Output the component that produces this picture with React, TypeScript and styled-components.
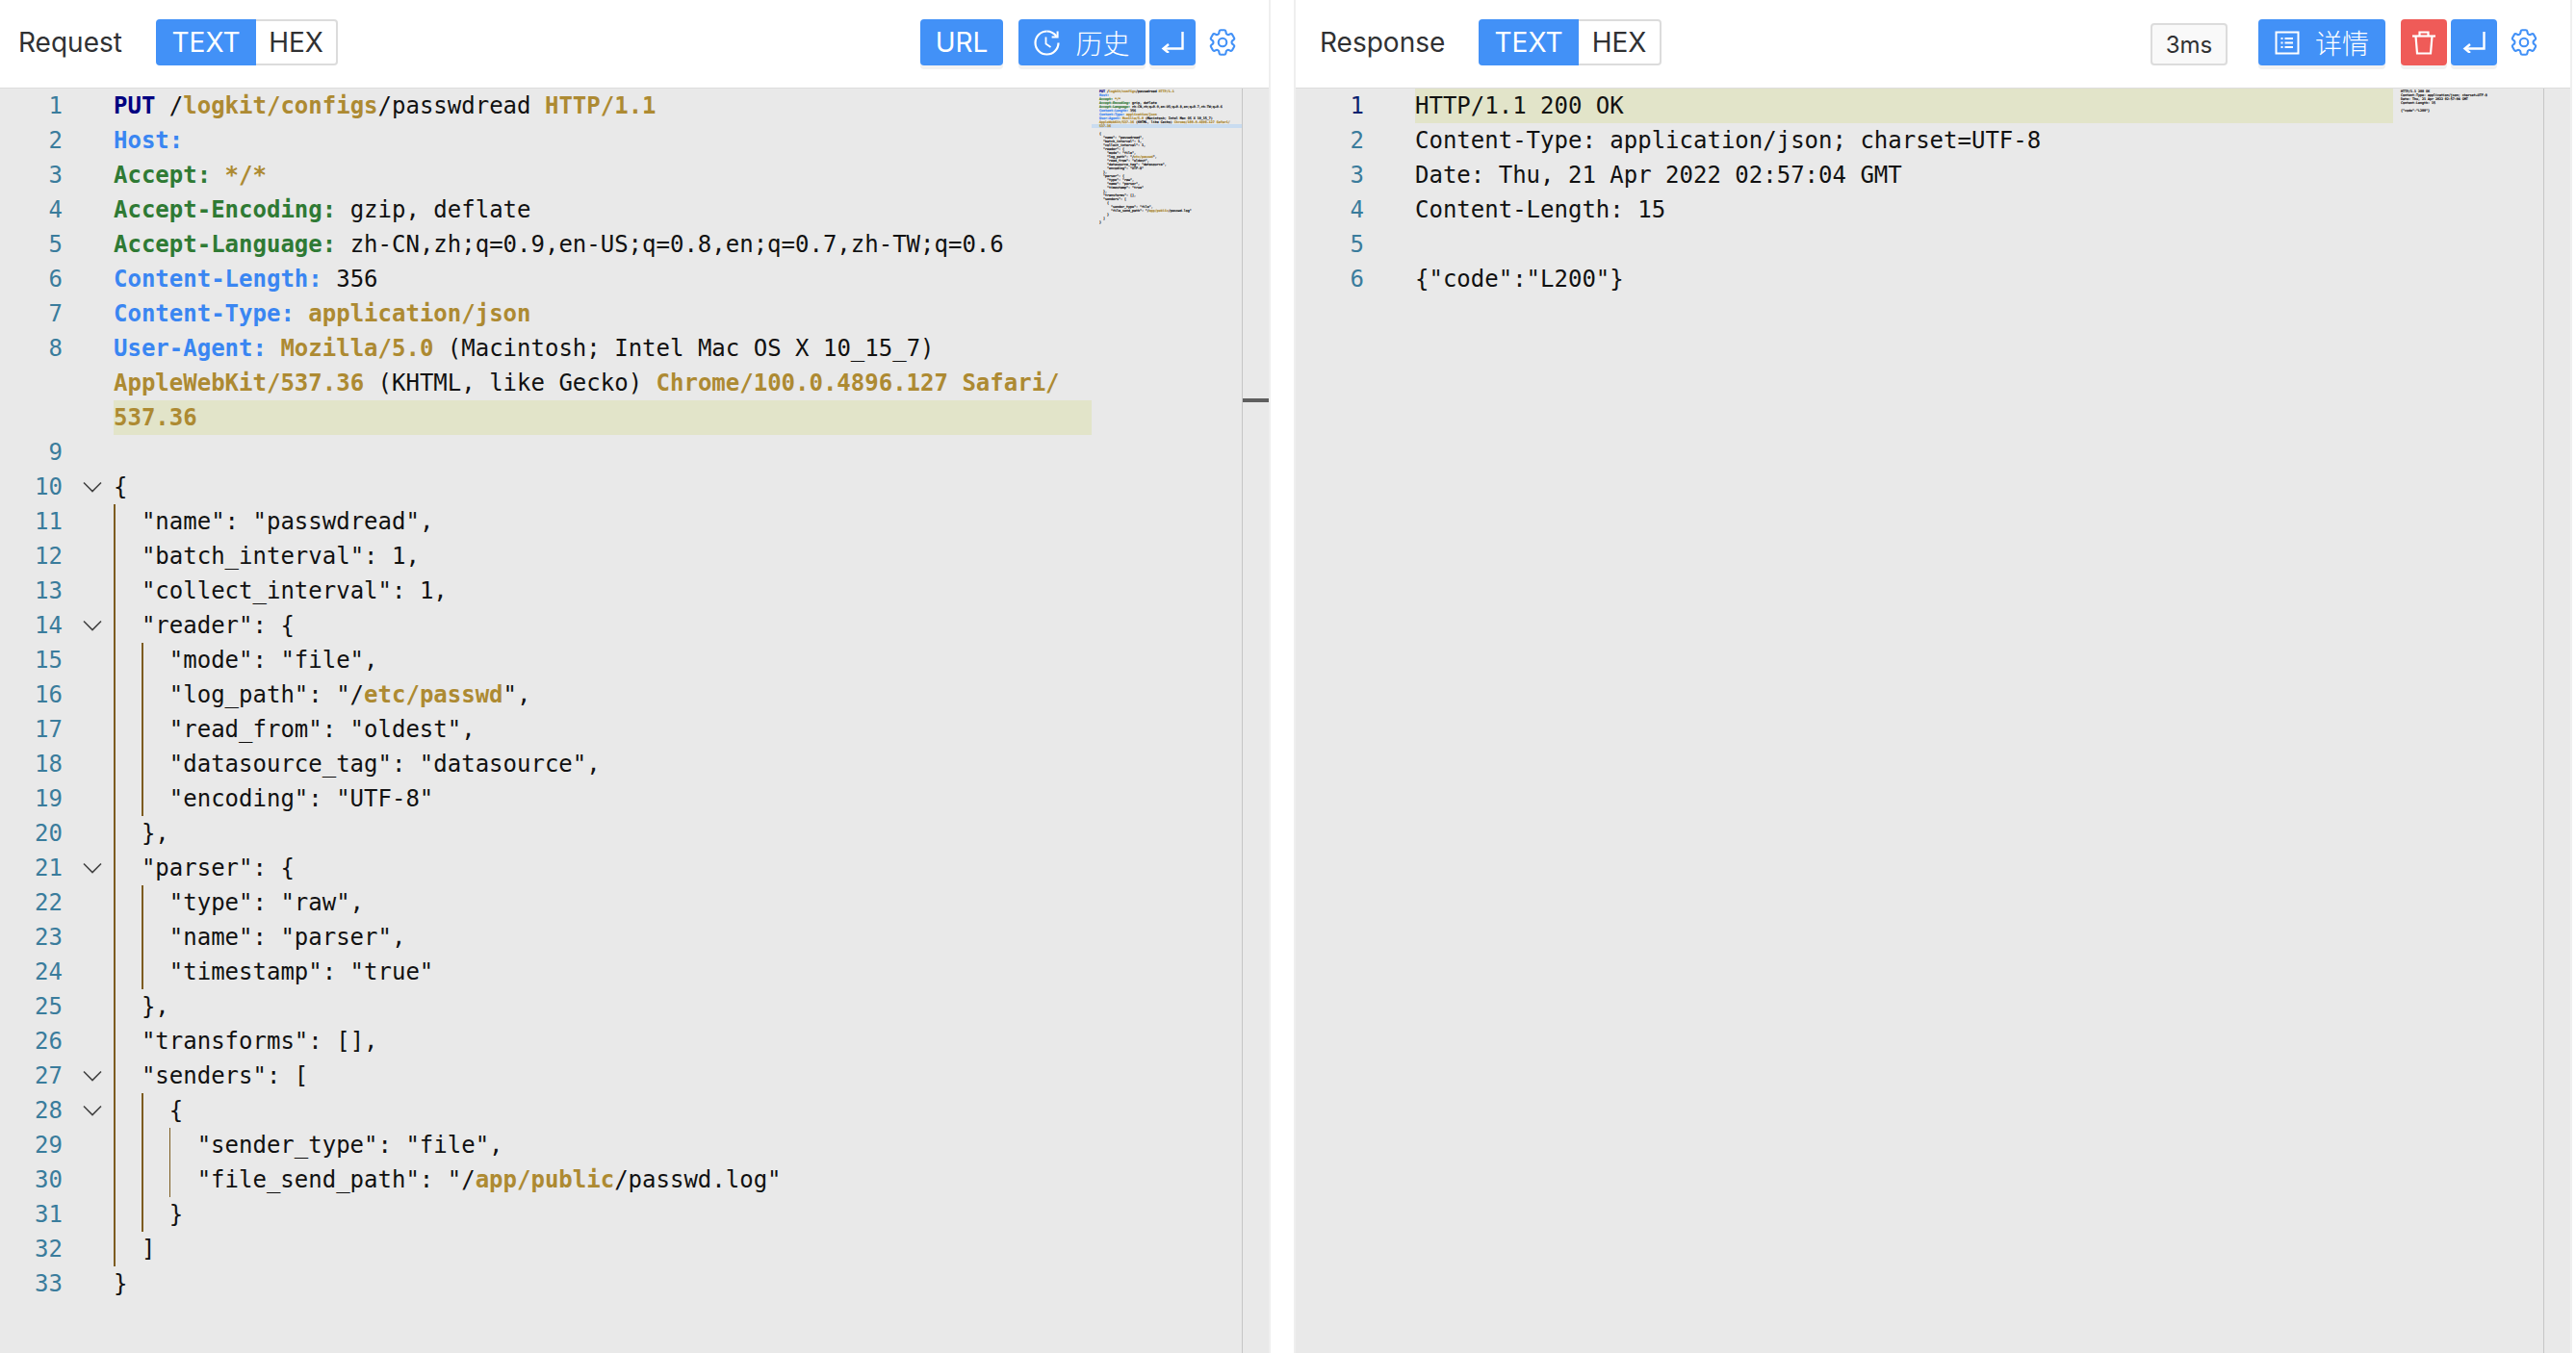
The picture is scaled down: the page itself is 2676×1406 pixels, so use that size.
import React from 'react';
import styled, { createGlobalStyle } from 'styled-components';
import { HiOutlineCog6Tooth } from 'react-icons/hi2';

const GlobalStyle = createGlobalStyle`
  html,
  body {
    margin: 0;
    background: #fff;
    overflow: hidden;
  }
`;

const BLUE = '#4291f7';
const CODE_FONT = '"DejaVu Sans Mono", "Liberation Mono", monospace';

type Kind = 'plain' | 'method' | 'blue' | 'green' | 'gold';
type Seg = [Kind, string];

interface Line {
  depth?: number;
  fold?: boolean;
  rows: Seg[][];
  activeRow?: number;
}

const p = (t: string): Seg => ['plain', t];
const g = (t: string): Seg => ['gold', t];

const json = (depth: number, segs: Seg[] | string, fold = false): Line => ({
  depth,
  fold,
  rows: [typeof segs === 'string' ? [p(segs)] : segs],
});

const requestLines: Line[] = [
  {
    rows: [
      [['method', 'PUT'], p(' /'), g('logkit/configs'), p('/passwdread '), g('HTTP/1.1')],
    ],
  },
  { rows: [[['blue', 'Host:']]] },
  { rows: [[['green', 'Accept:'], p(' '), g('*/*')]] },
  { rows: [[['green', 'Accept-Encoding:'], p(' gzip, deflate')]] },
  {
    rows: [
      [['green', 'Accept-Language:'], p(' zh-CN,zh;q=0.9,en-US;q=0.8,en;q=0.7,zh-TW;q=0.6')],
    ],
  },
  { rows: [[['blue', 'Content-Length:'], p(' 356')]] },
  { rows: [[['blue', 'Content-Type:'], p(' '), g('application/json')]] },
  {
    rows: [
      [['blue', 'User-Agent:'], p(' '), g('Mozilla/5.0'), p(' (Macintosh; Intel Mac OS X 10_15_7)')],
      [g('AppleWebKit/537.36'), p(' (KHTML, like Gecko) '), g('Chrome/100.0.4896.127 Safari/')],
      [g('537.36')],
    ],
    activeRow: 2,
  },
  { rows: [[]] },
  json(0, '{', true),
  json(1, '"name": "passwdread",'),
  json(1, '"batch_interval": 1,'),
  json(1, '"collect_interval": 1,'),
  json(1, '"reader": {', true),
  json(2, '"mode": "file",'),
  json(2, [p('"log_path": "/'), g('etc/passwd'), p('",')]),
  json(2, '"read_from": "oldest",'),
  json(2, '"datasource_tag": "datasource",'),
  json(2, '"encoding": "UTF-8"'),
  json(1, '},'),
  json(1, '"parser": {', true),
  json(2, '"type": "raw",'),
  json(2, '"name": "parser",'),
  json(2, '"timestamp": "true"'),
  json(1, '},'),
  json(1, '"transforms": [],'),
  json(1, '"senders": [', true),
  json(2, '{', true),
  json(3, '"sender_type": "file",'),
  json(3, [p('"file_send_path": "/'), g('app/public'), p('/passwd.log"')]),
  json(2, '}'),
  json(1, ']'),
  json(0, '}'),
];

const responseLines: Line[] = [
  { rows: [[p('HTTP/1.1 200 OK')]], activeRow: 0 },
  { rows: [[p('Content-Type: application/json; charset=UTF-8')]] },
  { rows: [[p('Date: Thu, 21 Apr 2022 02:57:04 GMT')]] },
  { rows: [[p('Content-Length: 15')]] },
  { rows: [[]] },
  { rows: [[p('{"code":"L200"}')]] },
];

const tokenColors: Record<Kind, string> = {
  plain: '#111',
  method: '#000080',
  blue: '#3a86f2',
  green: '#2f7a34',
  gold: '#ad8a32',
};

const Page = styled.div`
  display: flex;
  width: 2676px;
  height: 1406px;
  overflow: hidden;
  background: #fff;
  font-family: Inter, "Noto Sans CJK SC", sans-serif;
`;

const Panel = styled.section<{ $width: number }>`
  display: flex;
  flex-direction: column;
  flex: none;
  width: ${(props) => props.$width}px;
  height: 100%;
`;

const PanelGap = styled.div`
  flex: none;
  width: 24px;
  border-left: 2px solid #efefef;
  border-right: 2px solid #efefef;
`;

const EdgeBand = styled.div`
  flex: none;
  width: 2px;
  background: #efefef;
`;

const Toolbar = styled.header<{ $inset: number }>`
  display: flex;
  align-items: center;
  flex: none;
  height: 92px;
  padding: 0 0 4px ${(props) => props.$inset}px;
  box-sizing: border-box;
`;

const Title = styled.h2<{ $width: number }>`
  flex: none;
  width: ${(props) => props.$width}px;
  margin: 0;
  color: #303133;
  font-size: 28px;
  font-weight: 400;
  line-height: 48px;
`;

const Segmented = styled.div`
  display: flex;
  height: 48px;
`;

const Segment = styled.div<{ $active?: boolean; $width: number }>`
  display: flex;
  align-items: center;
  justify-content: center;
  width: ${(props) => props.$width}px;
  box-sizing: border-box;
  font-size: 28px;
  color: ${(props) => (props.$active ? '#fff' : '#303133')};
  background: ${(props) => (props.$active ? BLUE : '#fff')};
  border: ${(props) => (props.$active ? 'none' : '2px solid #dcdcdc')};
  border-left: none;
  border-radius: ${(props) => (props.$active ? '4px 0 0 4px' : '0 4px 4px 0')};
`;

const Spacer = styled.div<{ $width?: number }>`
  flex: ${(props) => (props.$width ? 'none' : '1')};
  width: ${(props) => props.$width ?? 0}px;
`;

const Button = styled.div<{ $width: number; $danger?: boolean }>`
  display: flex;
  align-items: center;
  justify-content: center;
  flex: none;
  width: ${(props) => props.$width}px;
  height: 48px;
  color: #fff;
  font-size: 28px;
  border-radius: 4px;
  background: ${(props) => (props.$danger ? '#ef5b58' : BLUE)};
  box-shadow: 0 4px 0 #f2f2f2;
`;

const IconLabel = styled.span`
  margin-left: 16px;
  font-family: "Noto Sans CJK SC", sans-serif;
  font-weight: 300;
`;

const Gear = styled(HiOutlineCog6Tooth)`
  flex: none;
  width: 34px;
  height: 34px;
  color: ${BLUE};
`;

const Timing = styled.div`
  display: flex;
  align-items: center;
  justify-content: center;
  flex: none;
  width: 80px;
  height: 44px;
  margin-top: 4px;
  box-sizing: border-box;
  color: #303133;
  font-size: 24px;
  background: #f9f9f9;
  border: 2px solid #dcdcdc;
  border-radius: 4px;
`;

const Editor = styled.div`
  display: flex;
  flex: 1;
  min-height: 0;
  background: #e9e9e9;
  border-top: 1px solid #ddd;
  margin-top: -1px;
`;

const Code = styled.div`
  flex: none;
  font-family: ${CODE_FONT};
  font-size: 24px;
  line-height: 36px;
`;

const CodeLine = styled.div`
  display: flex;
  align-items: flex-start;
`;

const LineNumber = styled.div<{ $width: number; $active?: boolean }>`
  flex: none;
  width: ${(props) => props.$width}px;
  height: 36px;
  text-align: right;
  color: ${(props) => (props.$active ? '#0b216f' : '#3a7c9c')};
`;

const FoldCell = styled.div`
  display: flex;
  align-items: center;
  justify-content: center;
  flex: none;
  width: 53px;
  height: 36px;
  padding-left: 9px;
  box-sizing: border-box;
`;

const Rows = styled.div`
  flex: none;
  width: 1016px;
`;

const Row = styled.div<{ $active?: boolean }>`
  display: flex;
  height: 36px;
  white-space: pre;
  background: ${(props) => (props.$active ? '#e2e4c9' : 'transparent')};
`;

const Indent = styled.span<{ $level: number }>`
  flex: none;
  width: 2ch;
  box-sizing: border-box;
  border-left: ${(props) => (props.$level === 2 ? 1 : 2)}px solid #7d5c20;
`;

const Token = styled.span<{ $kind: Kind }>`
  color: ${(props) => tokenColors[props.$kind]};
  font-weight: ${(props) => (props.$kind === 'plain' ? 400 : 700)};
`;

const Minimap = styled.div`
  flex: none;
  width: 156px;
  padding-top: 1px;
  box-sizing: border-box;
  font-family: ${CODE_FONT};
  font-size: 3.32px;
  line-height: 4px;
  -webkit-text-stroke: 0.2px currentColor;
`;

const MiniRow = styled.div<{ $marked?: boolean }>`
  height: 4px;
  padding-left: 8px;
  white-space: pre;
  background: ${(props) => (props.$marked ? '#c9dcf0' : 'transparent')};
`;

const Ruler = styled.div`
  position: relative;
  flex: none;
  width: 28px;
  border-left: 1px solid #c6c6c6;
  box-sizing: border-box;
`;

const RulerMark = styled.div<{ $top: number }>`
  position: absolute;
  left: 0;
  right: 0;
  top: ${(props) => props.$top}px;
  height: 4px;
  background: #5f5f5f;
`;

const Chevron = () => (
  <svg width="20" height="12" viewBox="0 0 20 12" fill="none">
    <path d="M1 1.5 10 10.5 19 1.5" stroke="#424242" strokeWidth="1.6" />
  </svg>
);

const HistoryIcon = () => (
  <svg width="27" height="27" viewBox="0 0 27 27" fill="none" stroke="#fff" strokeWidth="2.2">
    <path d="M13.5 1.5A12 12 0 1 0 25.5 13.5" />
    <path d="M13.5 1.5C17.5 1.5 21 3.5 23.4 6.6" />
    <path d="M24.6 1.6V7.6H18.6" strokeWidth="2" />
    <path d="M12.5 7.5V14.5L17.5 18" strokeWidth="1.8" />
  </svg>
);

const WrapIcon = () => (
  <svg width="24" height="22" viewBox="0 0 24 22" fill="none" stroke="#fff" strokeWidth="2.4">
    <path d="M22.5 0V17.5H3" />
    <path d="M8 13 2.5 17.5 8 22" />
  </svg>
);

const DetailIcon = () => (
  <svg width="26" height="25" viewBox="0 0 26 25" fill="none" stroke="#fff" strokeWidth="2">
    <rect x="1.5" y="1.5" width="23" height="22" />
    <path d="M10.5 8H19M10.5 12.5H19M10.5 17H19M6.5 8H8.5M6.5 12.5H8.5M6.5 17H8.5" />
  </svg>
);

const TrashIcon = () => (
  <svg width="24" height="25" viewBox="0 0 24 25" fill="none" stroke="#fff" strokeWidth="2.2">
    <path d="M0 5.5H24" />
    <path d="M7.5 5.5V1.5H16.5V5.5" />
    <path d="M3.5 5.5 5 23.5H19L20.5 5.5" />
  </svg>
);

const rowText = (row: Seg[]) =>
  row.map(([kind, text], i) => (
    <Token key={i} $kind={kind}>
      {text}
    </Token>
  ));

const Lines: React.FC<{ lines: Line[]; numberWidth: number; activeNumber?: number }> = ({
  lines,
  numberWidth,
  activeNumber,
}) => (
  <Code>
    {lines.map((line, index) => (
      <CodeLine key={index}>
        <LineNumber $width={numberWidth} $active={activeNumber === index}>
          {index + 1}
        </LineNumber>
        <FoldCell>{line.fold && <Chevron />}</FoldCell>
        <Rows>
          {line.rows.map((row, r) => (
            <Row key={r} $active={line.activeRow === r}>
              {Array.from({ length: line.depth ?? 0 }, (_, level) => (
                <Indent key={level} $level={level} />
              ))}
              {rowText(row)}
            </Row>
          ))}
        </Rows>
      </CodeLine>
    ))}
  </Code>
);

const Overview: React.FC<{ lines: Line[]; marked?: boolean }> = ({ lines, marked }) => (
  <Minimap>
    {lines.map((line, index) =>
      line.rows.map((row, r) => (
        <MiniRow key={`${index}-${r}`} $marked={marked && line.activeRow === r}>
          {' '.repeat((line.depth ?? 0) * 2)}
          {rowText(row)}
        </MiniRow>
      ))
    )}
  </Minimap>
);

export default function App() {
  return (
    <Page>
      <GlobalStyle />
      <Panel $width={1318}>
        <Toolbar $inset={19}>
          <Title $width={143}>Request</Title>
          <Segmented>
            <Segment $active $width={104}>TEXT</Segment>
            <Segment $width={85}>HEX</Segment>
          </Segmented>
          <Spacer />
          <Button $width={86}>URL</Button>
          <Spacer $width={16} />
          <Button $width={132}>
            <HistoryIcon />
            <IconLabel>历史</IconLabel>
          </Button>
          <Spacer $width={4} />
          <Button $width={48}>
            <WrapIcon />
          </Button>
          <Spacer $width={11} />
          <Gear />
          <Spacer $width={31} />
        </Toolbar>
        <Editor>
          <Lines lines={requestLines} numberWidth={65} />
          <Overview lines={requestLines} marked />
          <Ruler>
            <RulerMark $top={322} />
          </Ruler>
        </Editor>
      </Panel>
      <PanelGap />
      <Panel $width={1324}>
        <Toolbar $inset={25}>
          <Title $width={165}>Response</Title>
          <Segmented>
            <Segment $active $width={104}>TEXT</Segment>
            <Segment $width={86}>HEX</Segment>
          </Segmented>
          <Spacer />
          <Timing>3ms</Timing>
          <Spacer $width={32} />
          <Button $width={132}>
            <DetailIcon />
            <IconLabel>详情</IconLabel>
          </Button>
          <Spacer $width={16} />
          <Button $width={48} $danger>
            <TrashIcon />
          </Button>
          <Spacer $width={4} />
          <Button $width={48}>
            <WrapIcon />
          </Button>
          <Spacer $width={11} />
          <Gear />
          <Spacer $width={31} />
        </Toolbar>
        <Editor>
          <Lines lines={responseLines} numberWidth={71} activeNumber={0} />
          <Overview lines={responseLines} />
          <Ruler />
        </Editor>
      </Panel>
      <EdgeBand />
    </Page>
  );
}
